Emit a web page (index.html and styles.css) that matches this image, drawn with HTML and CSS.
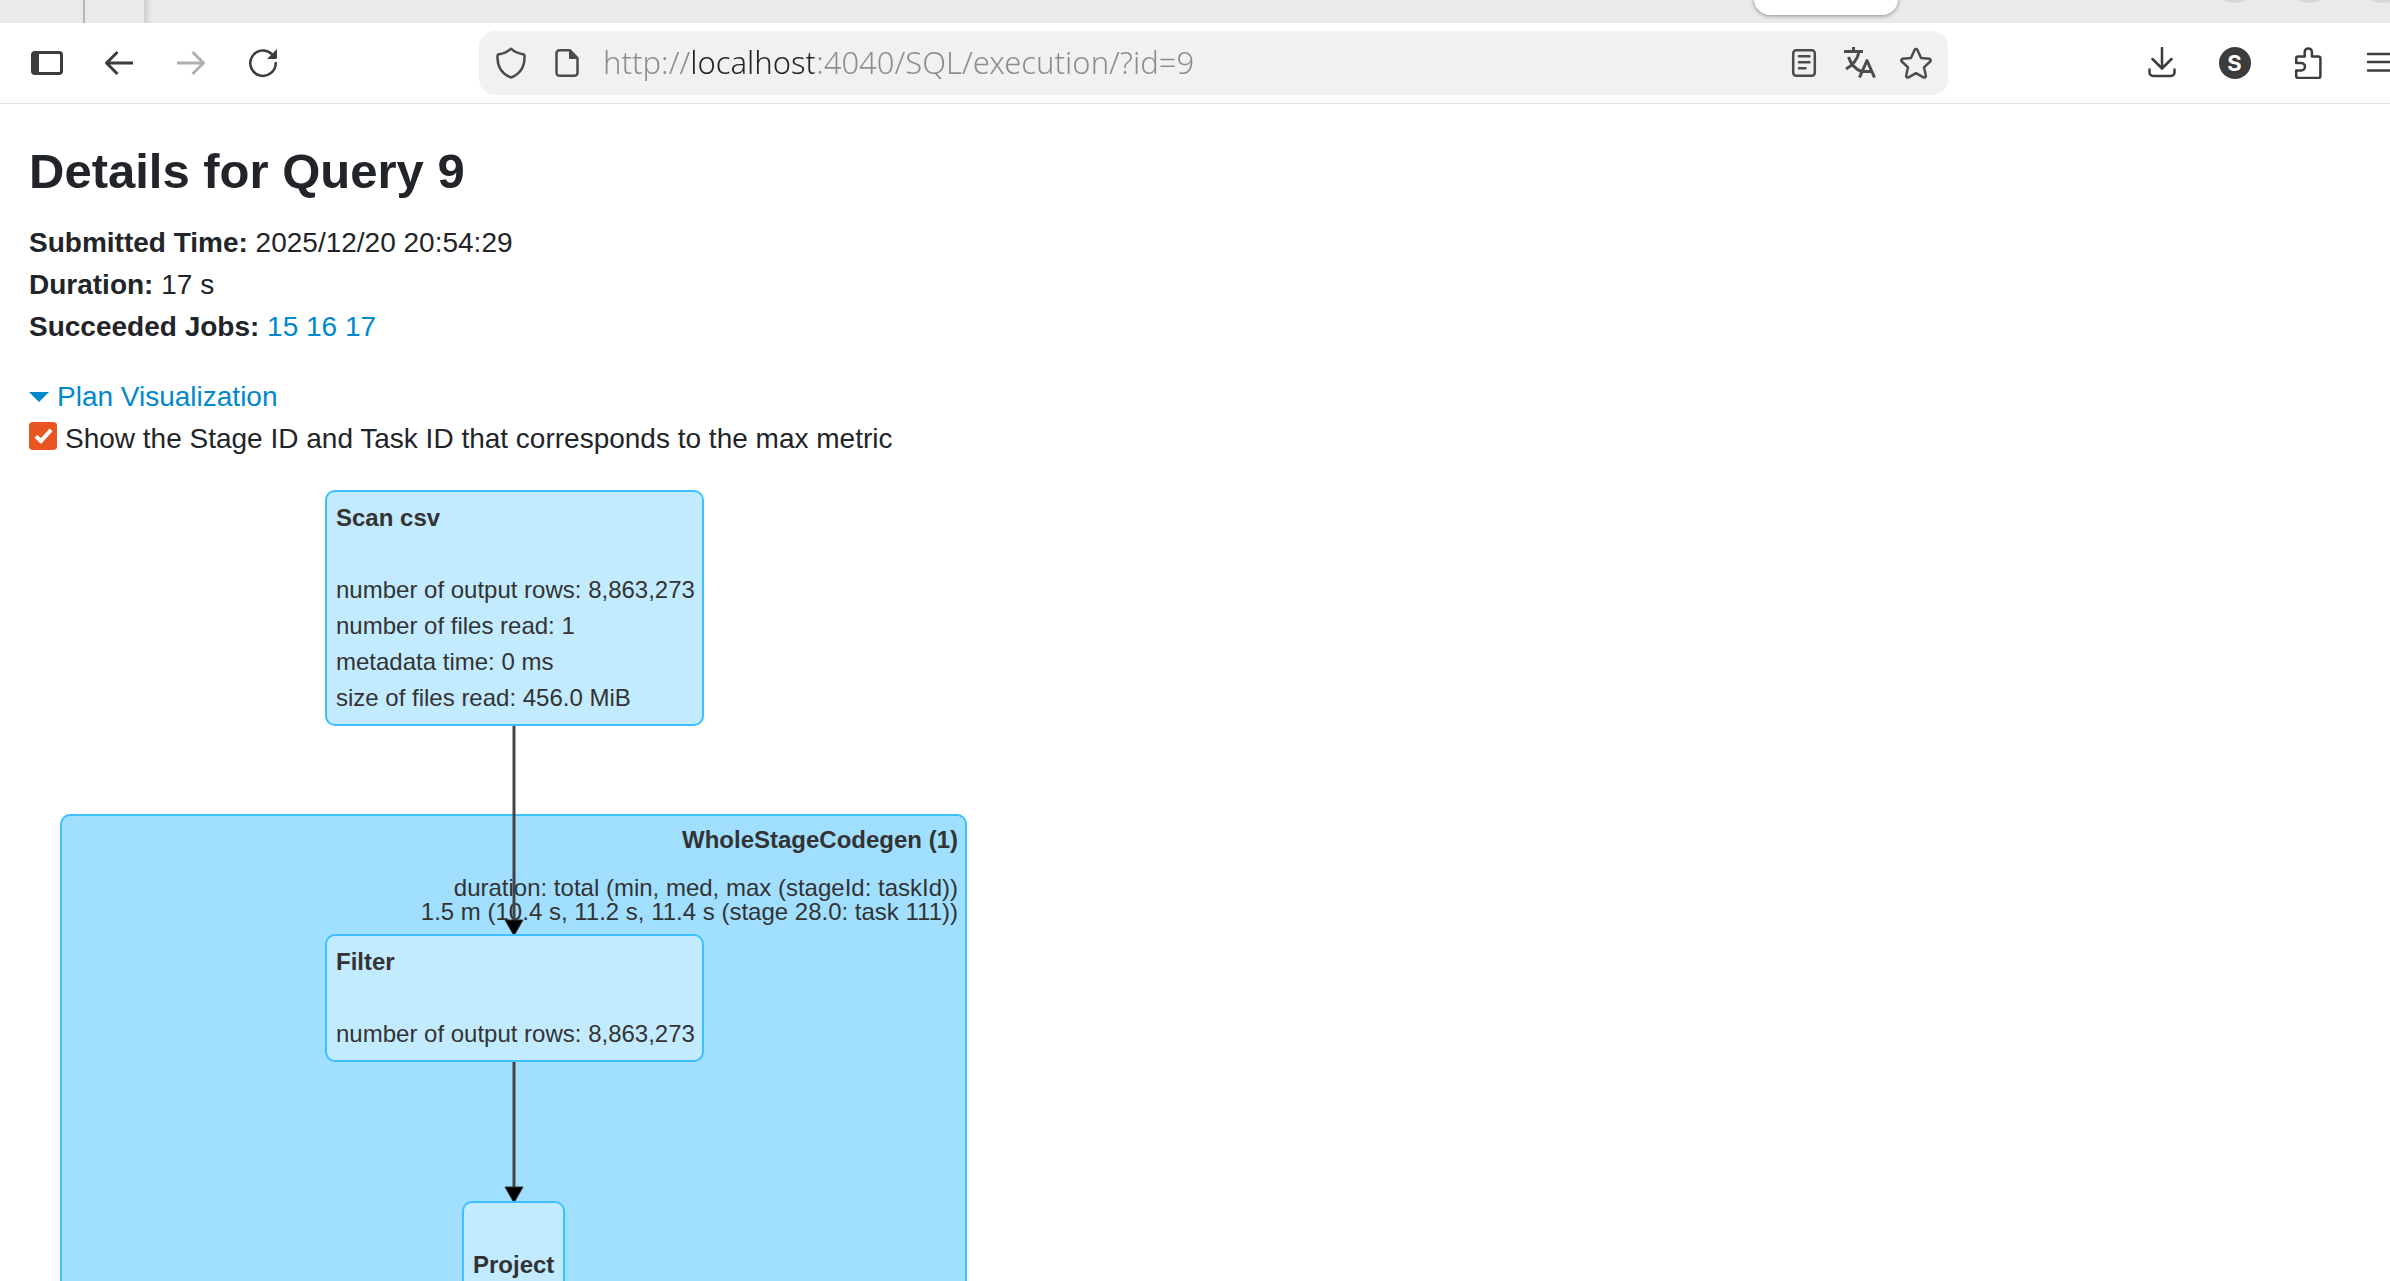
FILE: index.html
```html
<!DOCTYPE html>
<html lang="en">
<head>
  <meta charset="UTF-8">
  <meta name="viewport" content="width=device-width, initial-scale=1.0">
  <title>Details for Query 9</title>
  <link rel="stylesheet" href="styles.css">
</head>
<body>

  <div class="tabstrip">
    <span class="tab-sep"></span>
    <span class="tab-edge"></span>
    <span class="popup"></span>
    <div class="window-buttons">
      <span></span><span></span><span></span>
    </div>
  </div>

  <nav class="toolbar">
    <button class="tool" aria-label="Sidebar">
      <svg viewBox="0 0 32 32"><rect x="1.5" y="5.5" width="29" height="21" rx="2.5"/><path class="solid" d="M1.5 5.500H8v21H1.500z"/></svg>
    </button>
    <button class="tool" aria-label="Back">
      <svg viewBox="0 0 32 32"><path d="M14.500 5 3.500 16l11 11M3.500 16H30"/></svg>
    </button>
    <button class="tool" aria-label="Forward" disabled>
      <svg viewBox="0 0 32 32"><path d="M17.500 5l11 11-11 11M28.500 16H2"/></svg>
    </button>
    <button class="tool" aria-label="Reload">
      <svg viewBox="0 0 32 32"><path class="thin" d="M24.500 6.700A12.700 12.700 0 1 0 28.700 16"/><path class="solid" d="M30 2v8.500a1.500 1.500 0 0 1-1.500 1.500H20z"/></svg>
    </button>

    <div class="urlbar">
      <button aria-label="Tracking protection">
        <svg viewBox="0 0 32 32"><path class="thin" d="M16 1.700C13 4.500 9 6.500 4 7.300 2 7.600 2.500 9 2.500 11 2.700 20 7 27 16 30.500 25 27 29.300 20 29.500 11 29.500 9 30 7.600 28 7.300 23 6.500 19 4.500 16 1.700z"/></svg>
      </button>
      <button aria-label="Site information">
        <svg viewBox="0 0 32 32"><path class="thin" d="M19 3.300H8.500a3 3 0 0 0-3 3v19.400a3 3 0 0 0 3 3h15a3 3 0 0 0 3-3V11z"/><path class="solid" d="M18 2.500V12h9z"/></svg>
      </button>
      <input type="text" aria-label="Address" value="http://localhost:4040/SQL/execution/?id=9" spellcheck="false">
      <button aria-label="Reader view">
        <svg viewBox="0 0 32 32"><rect class="thin" x="5.200" y="3.200" width="21.600" height="25.600" rx="3"/><path class="thin" d="M11 9.200h10.500M11 15.200h10.500M11 21.200h6.500"/></svg>
      </button>
      <button aria-label="Translate">
        <svg viewBox="0 0 32 32"><path d="M0 4.500h19M9.500 0v5M4.500 10c2 6 6.500 12 13 14.500M15 5c-1.500 7-6 13-13 17M15.500 30.500 23 13.500l7.500 17M18 24.500h10"/></svg>
      </button>
      <button aria-label="Bookmark this page">
        <svg viewBox="0 0 32 32"><path class="thin" d="M14.600 2.900a1.600 1.600 0 0 1 2.800 0l3.700 8 8.200.900a1.600 1.600 0 0 1 .9 2.700l-6.200 5.800 1.800 8.300a1.600 1.600 0 0 1-2.300 1.700L16 26.100l-7.500 4.200a1.600 1.600 0 0 1-2.300-1.700L8 20.300l-6.200-5.800a1.600 1.600 0 0 1 .9-2.700l8.200-.9z"/></svg>
      </button>
    </div>

    <button class="tool right" aria-label="Downloads">
      <svg viewBox="0 0 32 32"><path class="thin" d="M16 1v20M6.500 12l9.500 9.500 9.500-9.500M3.500 22.500v3a3.500 3.500 0 0 0 3.500 3.500h18a3.500 3.500 0 0 0 3.500-3.500v-3"/></svg>
    </button>
    <button class="tool right" aria-label="Account">
      <span class="avatar">S</span>
    </button>
    <button class="tool right" aria-label="Extensions">
      <svg viewBox="0 0 32 32"><path class="thin" d="M4.200 16V11.500a2 2 0 0 1 2-2h6.500V5a3.600 3.600 0 0 1 7.200 0v4.500h6.500a2 2 0 0 1 2 2V29a2 2 0 0 1-2 2H6.200a2 2 0 0 1-2-2v-5.500h5a3.700 3.700 0 0 0 0-7.500z"/></svg>
    </button>
    <button class="tool right" aria-label="Menu">
      <svg viewBox="0 0 32 32"><path class="thin" d="M3 7h26M3 15h26M3 23.500h26"/></svg>
    </button>
  </nav>

  <main>
    <h3>Details for Query 9</h3>
    <ul class="summary">
      <li><strong>Submitted Time:</strong> 2025/12/20 20:54:29</li>
      <li><strong>Duration:</strong> 17 s</li>
      <li><strong>Succeeded Jobs:</strong> <a href="#job15">15</a> <a href="#job16">16</a> <a href="#job17">17</a></li>
    </ul>

    <a class="toggle" href="#plan-viz"><span class="arrow-open"></span>Plan Visualization</a>
    <div class="option">
      <input type="checkbox" id="stageId" checked>
      <label for="stageId">Show the Stage ID and Task ID that corresponds to the max metric</label>
    </div>

    <div class="graph" id="plan-viz">
      <div class="cluster">
        <b>WholeStageCodegen (1)</b>
        <p>duration: total (min, med, max (stageId: taskId))<br>1.5 m (10.4 s, 11.2 s, 11.4 s (stage 28.0: task 111))</p>
      </div>

      <svg class="edges" viewBox="0 0 960 860">
        <path class="edge" d="M485 265V461M485 602V727"/>
        <path class="head" d="M476 460h18l-8 14h-2zM476 727h18l-8 14h-2z"/>
      </svg>

      <div class="node scan">
        <b>Scan csv</b>
        <p>number of output rows: 8,863,273</p>
        <p>number of files read: 1</p>
        <p>metadata time: 0 ms</p>
        <p>size of files read: 456.0 MiB</p>
      </div>
      <div class="node filter">
        <b>Filter</b>
        <p>number of output rows: 8,863,273</p>
      </div>
      <div class="node project">
        <b>Project</b>
      </div>
    </div>
  </main>

</body>
</html>
```
FILE: styles.css
```css
* {
    box-sizing: border-box;
}

body {
    margin: 0;
    height: 100vh;
    display: flex;
    flex-direction: column;
    overflow: hidden;
    font-family: "Liberation Sans", Arial, sans-serif;
    font-size: 28px;
    line-height: 42px;
    color: #212529;
    background: #fff;
}

p, h3, ul {
    margin: 0;
    padding: 0;
}

a {
    color: #0088cc;
    text-decoration: none;
}

/* Browser chrome */
.tabstrip {
    flex: none;
    display: flex;
    align-items: flex-end;
    height: 23px;
    background: #eaeaea;
    overflow: hidden;
}

.tab-sep {
    width: 2px;
    height: 23px;
    margin-left: 83px;
    background: #b8b8b8;
}

.tab-edge {
    width: 8px;
    height: 23px;
    margin-left: 59px;
    background: linear-gradient(to right, #cfcfcf, #eaeaea);
}

.popup {
    width: 144px;
    height: 40px;
    margin-left: auto;
    margin-bottom: 8px;
    border-radius: 16px;
    background: #fff;
    box-shadow: 0 1px 4px rgba(0, 0, 0, 0.4);
}

.window-buttons {
    display: flex;
    gap: 24px;
    margin-left: 312px;
    margin-right: -18px;
    margin-bottom: 20px;
}

.window-buttons span {
    width: 50px;
    height: 50px;
    border-radius: 50%;
    background: #d8d8d8;
}

.toolbar {
    flex: none;
    display: flex;
    align-items: center;
    height: 81px;
    margin-right: -27px;
    padding-left: 11px;
    border-bottom: 1px solid #e0e0e0;
    background: linear-gradient(#fff 88%, #fafafa);
}

button {
    display: flex;
    align-items: center;
    justify-content: center;
    flex: none;
    height: 64px;
    padding: 0;
    border: none;
    background: none;
    color: #3c3c3c;
}

.tool {
    width: 72px;
}

.tool.right {
    width: 73px;
}

button:disabled {
    color: #b0b0b0;
}

button svg {
    width: 32px;
    height: 32px;
    fill: none;
    stroke: currentColor;
    stroke-width: 3;
    stroke-linejoin: round;
}

button svg .thin {
    stroke-width: 2.5;
    stroke-linecap: round;
}

button svg .solid {
    fill: currentColor;
    stroke: none;
}

.avatar {
    width: 32px;
    height: 32px;
    border-radius: 50%;
    background: #3c3c3c;
    color: #fff;
    font: bold 22px/32px Inter, sans-serif;
    text-align: center;
}

.urlbar {
    flex: 1;
    display: flex;
    align-items: center;
    height: 64px;
    margin: 0 177px 0 180px;
    padding: 0 4px;
    border-radius: 16px;
    background: #f1f1f1;
}

.urlbar button {
    width: 56px;
    color: #4c4c4c;
}

.urlbar input {
    flex: 1;
    min-width: 0;
    height: 64px;
    padding: 0 8px 2px;
    border: none;
    outline: none;
    font: 300 31px "Noto Sans", sans-serif;
    /* host part of the address is darker than the rest */
    color: transparent;
    background: linear-gradient(to right, #8c8c8c 96px, #222 96px, #222 219px, #8c8c8c 219px);
    -webkit-background-clip: text;
    background-clip: text;
}

/* Page */
main {
    flex: 1;
    min-height: 0;
    padding: 38px 29px 0;
    overflow: hidden;
}

h3 {
    margin-bottom: 22px;
    font-size: 49px;
    line-height: 58px;
}

.summary {
    margin-bottom: 28px;
    list-style: none;
}

.toggle {
    display: flex;
    align-items: center;
    gap: 8px;
}

.arrow-open {
    border: 10px solid transparent;
    border-top-color: #0088cc;
    border-bottom: none;
}

.option {
    display: flex;
    align-items: center;
    gap: 8px;
}

.option input {
    appearance: none;
    width: 28px;
    height: 28px;
    margin: 0 0 6px;
    border-radius: 4px;
    background: #e95420;
    display: grid;
    place-items: center;
}

.option input:checked::before {
    content: "";
    width: 5px;
    height: 13px;
    margin-bottom: 4px;
    border: solid #fff;
    border-width: 0 4px 4px 0;
    transform: rotate(42deg);
}

/* Plan graph */
.graph {
    position: relative;
    height: 900px;
    font-size: 24px;
    line-height: 36px;
    color: #333;
}

.cluster, .node {
    position: absolute;
    border: 2px solid #3ec0ff;
    border-radius: 10px;
}

.cluster {
    left: 31px;
    top: 354px;
    width: 907px;
    height: 540px;
    padding: 12px 7px;
    background: #a0dfff;
    text-align: right;
    line-height: 24px;
}

.cluster b {
    display: block;
    margin-bottom: 24px;
}

.edges {
    position: absolute;
    left: 0;
    top: 0;
    width: 960px;
    height: 860px;
}

.edge {
    stroke: #444;
    stroke-width: 3;
}

.head {
    fill: #000;
    stroke: #333;
}

.node {
    padding: 8px 7px 8px 9px;
    background: #c3ebff;
    white-space: nowrap;
}

.node b {
    display: block;
    margin-bottom: 36px;
}

.scan {
    left: 296px;
    top: 30px;
}

.filter {
    left: 296px;
    top: 474px;
}

.project {
    left: 433px;
    top: 741px;
    padding: 44px 9px 8px;
}
```
